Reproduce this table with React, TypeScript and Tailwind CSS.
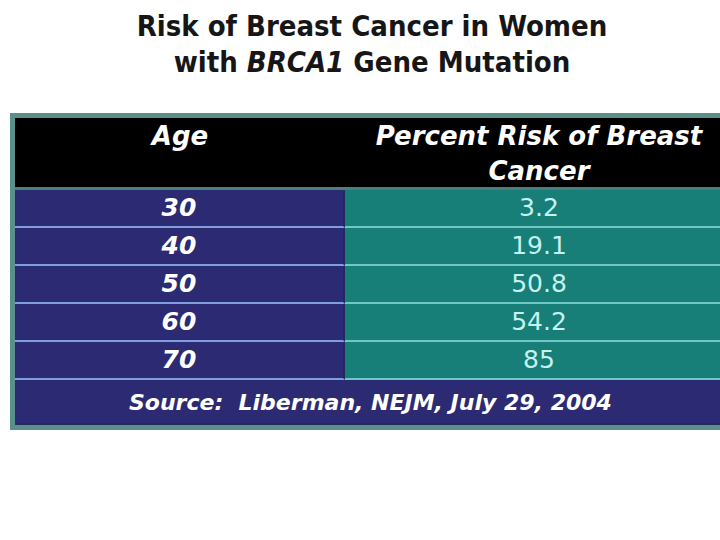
const rows = [
  { age: '30', risk: '3.2' },
  { age: '40', risk: '19.1' },
  { age: '50', risk: '50.8' },
  { age: '60', risk: '54.2' },
  { age: '70', risk: '85' },
]

export default function App() {
  return (
    <div className="w-[720px] h-[540px] overflow-hidden bg-white font-['DejaVu_Sans',sans-serif]">
      <div className="w-[744px]">
        <h1 className="pt-[8px] text-center text-[29px] leading-[36px] font-bold text-[#161616] font-stretch-condensed">
          Risk of Breast Cancer in Women
          <br />
          with <i>BRCA1</i> Gene Mutation
        </h1>

        <div className="ml-[10px] mt-[33px] w-[728px] border-[5px] border-[#5b8f8a]">
          <div className="grid grid-cols-[330px_1fr] bg-black h-[72px] border-b-[3px] border-[#4c7f7c] text-white italic font-bold text-[26px] leading-[35px]">
            <div className="text-center pt-[1px]">Age</div>
            <div className="text-center pt-[1px] px-4">Percent Risk of Breast Cancer</div>
          </div>

          {rows.map((r) => (
            <div key={r.age} className="grid grid-cols-[330px_1fr] h-[38px]">
              <div className="bg-[#2b2a72] border-r-2 border-[#1f2a5e] border-b-2 border-b-[#7f9ede] text-white italic font-bold text-[25px] leading-[36px] text-center">
                {r.age}
              </div>
              <div className="bg-[#187e78] border-b-2 border-[#6fc8c6] text-[#c6f1ef] text-[25px] leading-[36px] text-center">
                {r.risk}
              </div>
            </div>
          ))}

          <div className="bg-[#2b2a72] h-[45px] border-b-2 border-[#1f2a5e] text-white italic font-bold text-[22px] leading-[46px] pl-[114px]">
            Source:&nbsp; Liberman, NEJM, July 29, 2004
          </div>
        </div>
      </div>
    </div>
  )
}
